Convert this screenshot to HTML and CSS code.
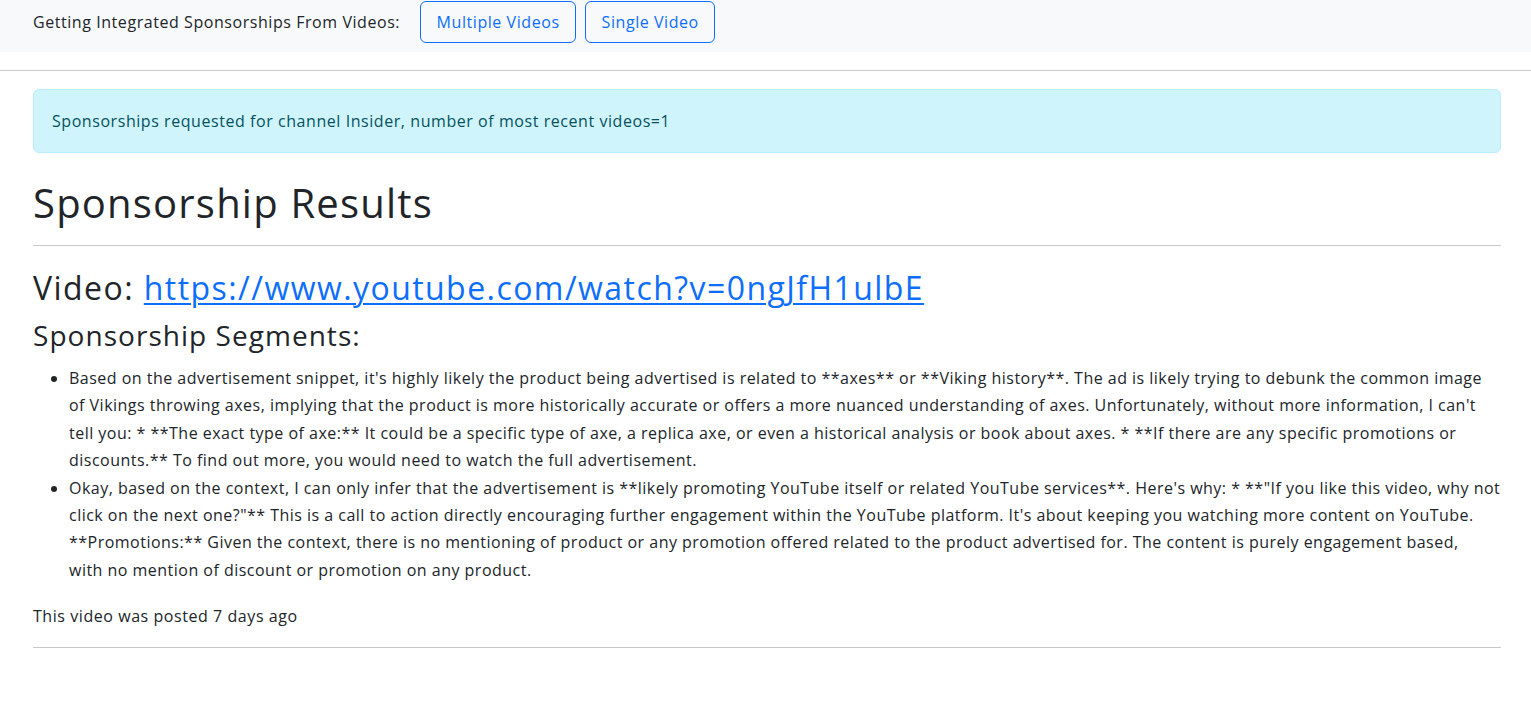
FILE: index.html
```html
<!DOCTYPE html>
<html lang="en">
<head>
<meta charset="utf-8">
<title>Sponsorship Results</title>
<link rel="stylesheet" href="styles.css">
</head>
<body>
<nav class="topbar">
  <span class="topbar-label">Getting Integrated Sponsorships From Videos:</span>
  <a class="btn" href="#">Multiple Videos</a>
  <a class="btn" href="#">Single Video</a>
</nav>
<hr class="rule rule-full">
<main class="content">
  <div class="alert">Sponsorships requested for channel Insider, number of most recent videos=1</div>
  <h1 class="title">Sponsorship Results</h1>
  <hr class="rule rule-title">
  <section class="video">
    <h2 class="video-title">Video: <a href="#">https://www.youtube.com/watch?v=0ngJfH1ulbE</a></h2>
    <h3 class="segments-title">Sponsorship Segments:</h3>
    <ul class="segments">
      <li>Based on the advertisement snippet, it's highly likely the product being advertised is related to **axes** or **Viking history**. The ad is likely trying to debunk the common image of Vikings throwing axes, implying that the product is more historically accurate or offers a more nuanced understanding of axes. Unfortunately, without more information, I can't tell you: * **The exact type of axe:** It could be a specific type of axe, a replica axe, or even a historical analysis or book about axes. * **If there are any specific promotions or discounts.** To find out more, you would need to watch the full advertisement.</li>
      <li>Okay, based on the context, I can only infer that the advertisement is **likely promoting YouTube itself or related YouTube services**. Here's why: * **"If you like this video, why not click on the next one?"** This is a call to action directly encouraging further engagement within the YouTube platform. It's about keeping you watching more content on YouTube. **Promotions:** Given the context, there is no mentioning of product or any promotion offered related to the product advertised for. The content is purely engagement based,<br>with no mention of discount or promotion on any product.</li>
    </ul>
    <p class="posted">This video was posted 7 days ago</p>
    <hr class="rule rule-end">
  </section>
</main>
</body>
</html>
```
FILE: styles.css
```css
html, body {
  margin: 0;
  padding: 0;
  background: #fff;
}

body {
  font-family: "Open Sans", "Noto Sans", sans-serif;
  font-size: 16px;
  line-height: 1.5;
  letter-spacing: 0.035em;
  color: #212529;
}

.topbar {
  display: flex;
  align-items: center;
  gap: 9px;
  height: 52px;
  box-sizing: border-box;
  padding: 1px 0 9px 33px;
  background: #f8f9fa;
}

.topbar-label {
  margin-right: 11px;
}

.btn {
  display: inline-block;
  padding: 8px 15.5px;
  line-height: 24px;
  border: 1px solid #0d6efd;
  border-radius: 6px;
  color: #0d6efd;
  text-decoration: none;
  background: transparent;
}

.rule {
  border: 0;
  border-top: 1px solid #c8c9ca;
  height: 0;
  margin: 0;
}

.rule-full {
  margin-top: 18px;
}

.content {
  padding: 18px 30px 40px 33px;
}

.alert {
  padding: 19px 17px 19px 18px;
  line-height: 24px;
  background: #cff4fc;
  border: 1px solid #b6effb;
  border-radius: 6px;
  color: #055160;
}

.title {
  margin: 26px 0 0;
  font-size: 40px;
  line-height: 48px;
  font-weight: 400;
  letter-spacing: 0.03em;
}

.rule-title {
  margin-top: 18px;
}

.video-title {
  margin: 23px 0 0;
  font-size: 32px;
  line-height: 38.4px;
  font-weight: 400;
  letter-spacing: 0.045em;
}

.video-title a {
  color: #0d6efd;
  text-decoration: underline;
  text-underline-offset: 3px;
  text-decoration-thickness: 2px;
}

.segments-title {
  margin: 12px 0 0;
  font-size: 28px;
  line-height: 33.6px;
  font-weight: 400;
  letter-spacing: 0.037em;
}

.segments {
  margin: 12px 0 0;
  padding-left: 36px;
  line-height: 27.4px;
  letter-spacing: 0.03em;
}

.posted {
  margin: 20px 0 0;
  line-height: 24px;
}

.rule-end {
  margin-top: 19px;
}
```
